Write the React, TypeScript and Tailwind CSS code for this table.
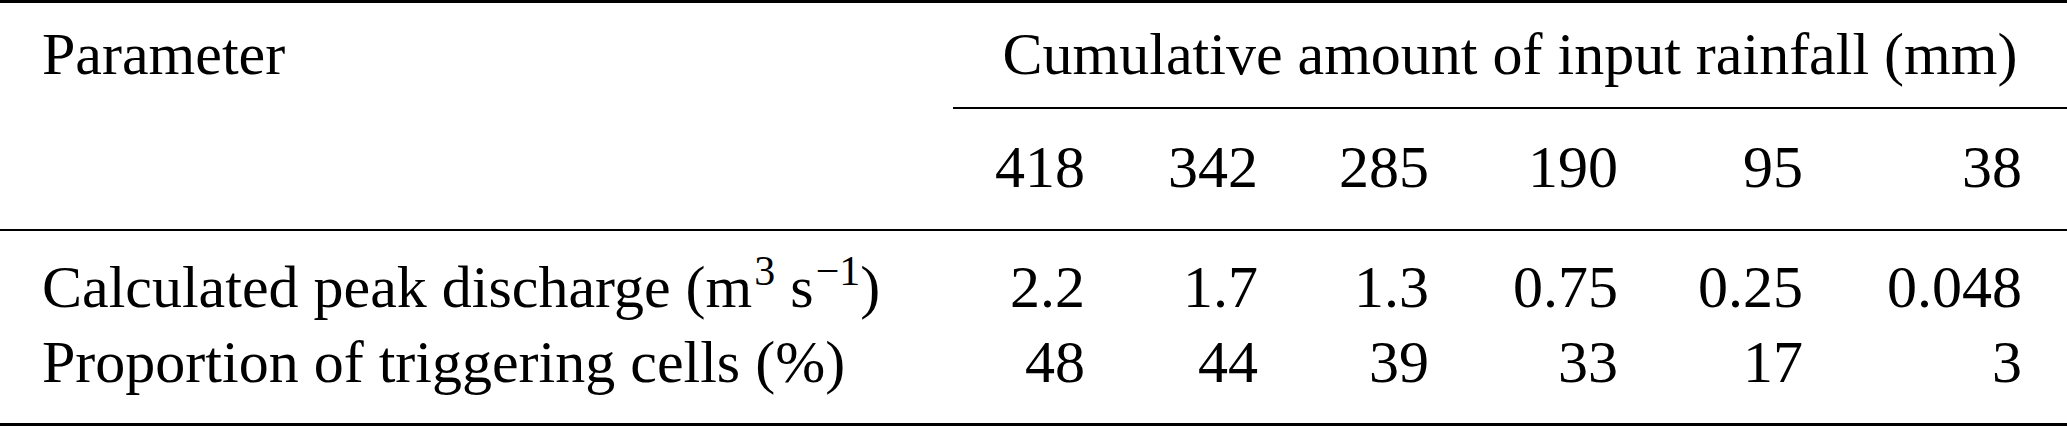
import React from "react";

const cols = "grid grid-cols-[953px_174px_173px_171px_189px_185px_222px]";

function NumRow({ label, values }: { label?: React.ReactNode; values: string[] }) {
  return (
    <div className={`${cols} h-[75px] leading-[75px]`}>
      <div className="pl-[42px] whitespace-nowrap">{label}</div>
      {values.map((v, i) => (
        <div
          key={i}
          className={`text-right whitespace-nowrap ${i === values.length - 1 ? "pr-[45px]" : "pr-[42px]"}`}
        >
          {v}
        </div>
      ))}
    </div>
  );
}

export default function App() {
  return (
    <div
      className="w-[2067px] h-[427px] bg-white text-black text-[60px] overflow-hidden"
      style={{ fontFamily: '"Liberation Serif", "Times New Roman", serif' }}
    >
      <div className="h-[3px] bg-black" />
      <div className={`${cols} mt-[14px] h-[75px] leading-[75px]`}>
        <div className="pl-[42px] whitespace-nowrap">Parameter</div>
        <div className="col-span-6 text-center whitespace-nowrap">
          Cumulative amount of input rainfall (mm)
        </div>
      </div>
      <div className={`${cols} mt-[15px]`}>
        <div />
        <div className="col-span-6 h-[2px] bg-black" />
      </div>
      <div className="mt-[21px]">
        <NumRow values={["418", "342", "285", "190", "95", "38"]} />
      </div>
      <div className="mt-[24px] h-[2px] bg-black" />
      <div className="mt-[19px]">
        <NumRow
          label={
            <span>
              Calculated peak discharge (m
              <span className="inline-block align-baseline text-[42px] leading-none relative top-[-22px] pl-[2px]">3</span>{" "}
              s
              <span className="inline-block align-baseline text-[42px] leading-none relative top-[-22px] pl-[2px]">−1</span>)
            </span>
          }
          values={["2.2", "1.7", "1.3", "0.75", "0.25", "0.048"]}
        />
        <NumRow
          label="Proportion of triggering cells (%)"
          values={["48", "44", "39", "33", "17", "3"]}
        />
      </div>
      <div className="mt-[23px] h-[3px] bg-black" />
    </div>
  );
}
